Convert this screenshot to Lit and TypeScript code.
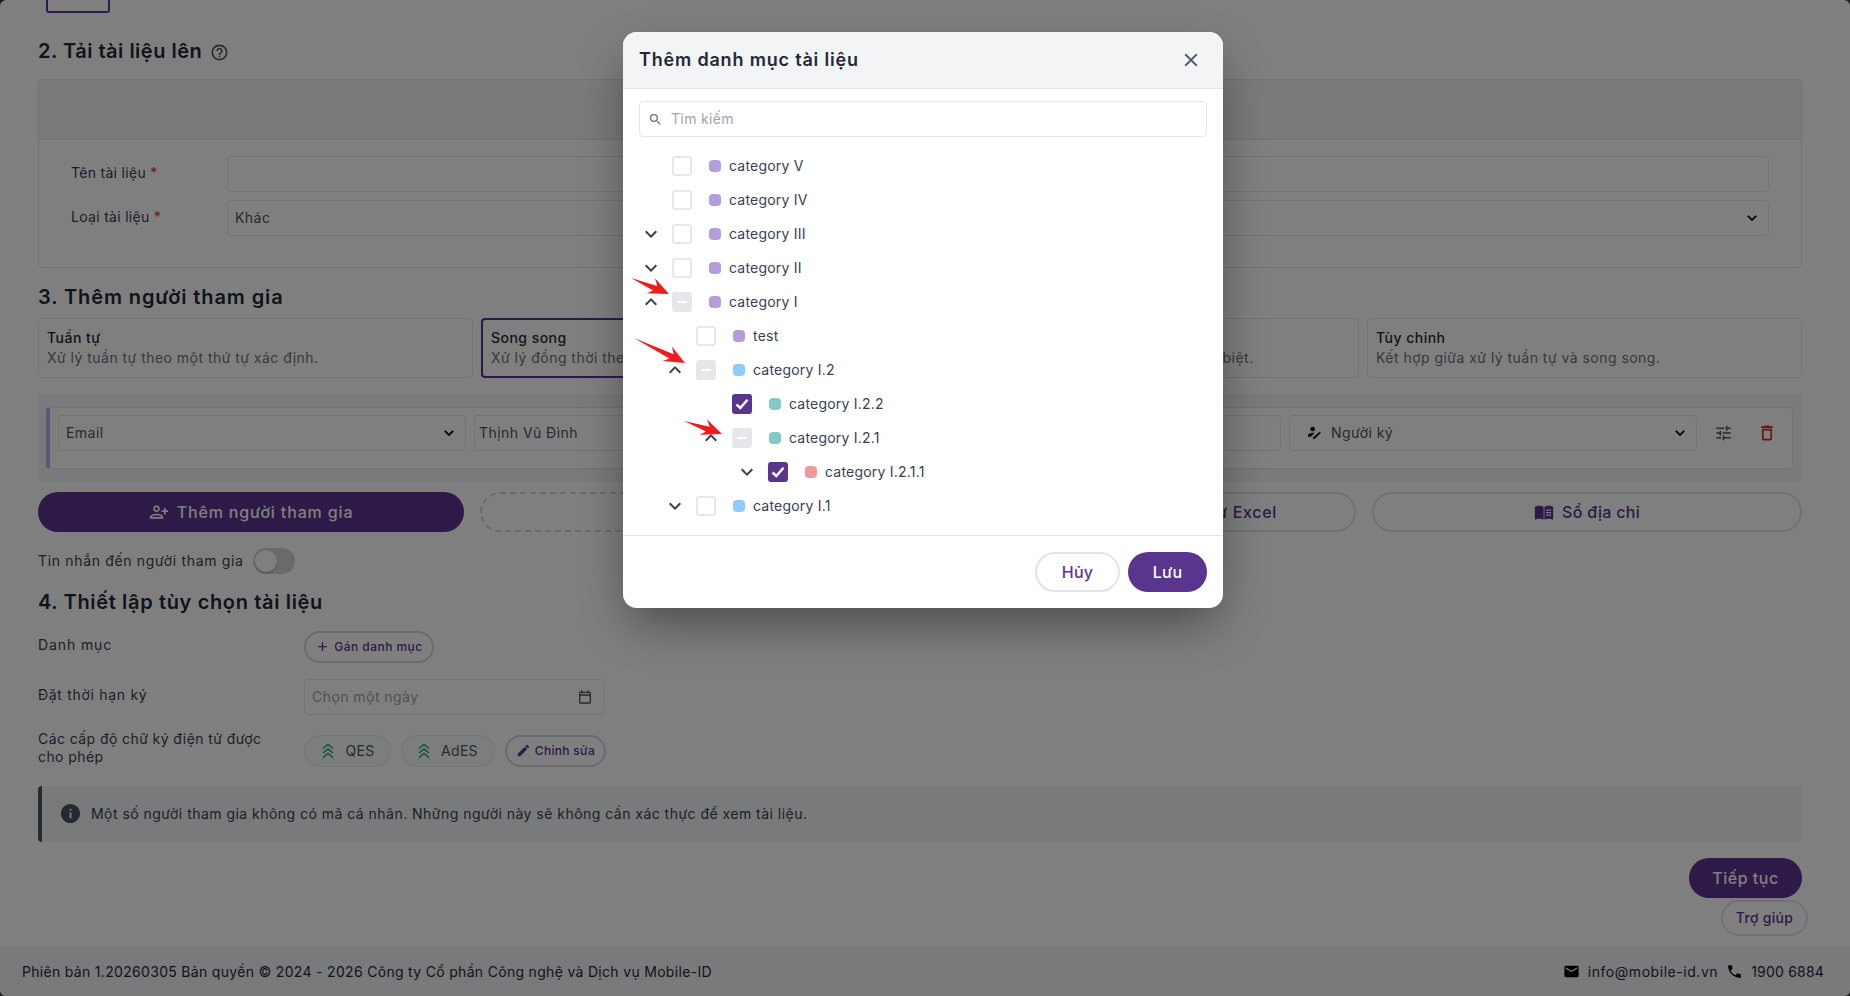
import { LitElement, html, css, svg } from "lit";
import { customElement } from "lit/decorators.js";

const P = {
  help: "M11 18h2v-2h-2v2zm1-16C6.48 2 2 6.48 2 12s4.48 10 10 10 10-4.48 10-10S17.52 2 12 2zm0 18c-4.41 0-8-3.59-8-8s3.59-8 8-8 8 3.59 8 8-3.59 8-8 8zm0-14c-2.21 0-4 1.79-4 4h2c0-1.1.9-2 2-2s2 .9 2 2c0 2-3 1.75-3 5h2c0-2.25 3-2.5 3-5 0-2.21-1.79-4-4-4z",
  close: "M19 6.41 17.59 5 12 10.59 6.41 5 5 6.41 10.59 12 5 17.59 6.41 19 12 13.41 17.59 19 19 17.59 13.41 12z",
  search: "M15.5 14h-.79l-.28-.27A6.471 6.471 0 0 0 16 9.5 6.5 6.5 0 1 0 9.5 16c1.61 0 3.09-.59 4.23-1.57l.27.28v.79l5 4.99L20.49 19l-4.99-5zm-6 0C7.01 14 5 11.99 5 9.5S7.01 5 9.5 5 14 7.01 14 9.5 11.99 14 9.5 14z",
  down: "M16.59 8.59 12 13.17 7.41 8.59 6 10l6 6 6-6z",
  up: "M12 8l-6 6 1.41 1.41L12 10.83l4.59 4.58L18 14z",
  tune: "M3 17v2h6v-2H3zM3 5v2h10V5H3zm10 16v-2h8v-2h-8v-2h-2v6h2zM7 9v2H3v2h4v2h2V9H7zm14 4v-2H11v2h10zm-6-4h2V7h4V5h-4V3h-2v6z",
  trash: "M6 19c0 1.1.9 2 2 2h8c1.1 0 2-.9 2-2V7H6v12zM8 9h8v10H8V9zm7.5-5-1-1h-5l-1 1H5v2h14V4z",
  personAdd: "M9 12c-2.21 0-4-1.79-4-4s1.79-4 4-4 4 1.79 4 4-1.79 4-4 4zm0-6c-1.1 0-2 .9-2 2s.9 2 2 2 2-.9 2-2-.9-2-2-2zm0 8c2.67 0 8 1.34 8 4v2H1v-2c0-2.66 5.33-4 8-4zm6 4c-.22-.72-3.31-2-6-2-2.7 0-5.8 1.29-6 2h12zm3-3v-3h-3v-2h3V7h2v3h3v2h-3v3h-2z",
  info: "M12 2C6.48 2 2 6.48 2 12s4.48 10 10 10 10-4.48 10-10S17.52 2 12 2zm1 15h-2v-6h2v6zm0-8h-2V7h2v2z",
  mail: "M20 4H4c-1.1 0-1.99.9-1.99 2L2 18c0 1.1.9 2 2 2h16c1.1 0 2-.9 2-2V6c0-1.1-.9-2-2-2zm0 4-8 5-8-5V6l8 5 8-5v2z",
  phone: "M6.62 10.79c1.44 2.83 3.76 5.14 6.59 6.59l2.2-2.2c.27-.27.67-.36 1.02-.24 1.12.37 2.33.57 3.57.57.55 0 1 .45 1 1V20c0 .55-.45 1-1 1-9.39 0-17-7.61-17-17 0-.55.45-1 1-1h3.5c.55 0 1 .45 1 1 0 1.25.2 2.45.57 3.57.11.35.03.74-.25 1.02l-2.2 2.2z",
  plus: "M19 13h-6v6h-2v-6H5v-2h6V5h2v6h6v2z",
  edit: "M3 17.25V21h3.75L17.81 9.94l-3.75-3.75L3 17.25zM20.71 7.04a1 1 0 0 0 0-1.41l-2.34-2.34a1 1 0 0 0-1.41 0l-1.83 1.83 3.75 3.75 1.83-1.83z",
  calendar: "M6 2h2v2h8V2h2v2h1c1.1 0 2 .9 2 2v14c0 1.1-.9 2-2 2H5c-1.1 0-2-.9-2-2V6c0-1.1.9-2 2-2h1V2zM5 10v10h14V10H5zm0-2h14V6H5v2z",
  book: "M1 6c1.5-1.1 3.6-1.5 5.5-1.5S10.5 4.9 11.5 6v15.2c-1.4-.9-3.3-1.2-5-1.2-1.5 0-3.4.4-5 1.1-.3.1-.5-.1-.5-.4V6zM12.5 6c1-1.1 3.1-1.5 5-1.5S21.5 4.9 23 6v14.7c0 .3-.2.5-.5.4-1.6-.7-3.5-1.1-5-1.1-1.7 0-3.6.3-5 1.2V6zm2 3v1.5h6V9h-6zm0 3v1.5h6V12h-6zm0 3v1.5h6V15h-6z",
  signer: "M10 4a3.6 3.6 0 1 1 0 7.2A3.6 3.6 0 0 1 10 4zM3 19v-1.8c0-2.6 4.4-4 7-4 .9 0 1.7.1 2.5.3L7.3 19H3zM20.5 11.5l1.8 1.8-8.8 8.8-3.4.9.9-3.4 9.5-8.1z",
  excel: "M14 2H6c-1.1 0-2 .9-2 2v16c0 1.1.9 2 2 2h12c1.1 0 2-.9 2-2V8l-6-6zm-1 7V3.5L18.5 9H13zM8 13h8v2H8v-2zm0 4h8v2H8v-2z",
};

const icon = (d: string, cls = "") =>
  html`<svg class="ic ${cls}" viewBox="0 0 24 24" aria-hidden="true"><path d=${d}></path></svg>`;

const chevrons = () => html`<svg class="lvl" viewBox="0 0 16 18" aria-hidden="true">
  <path d="M3 6.5 8 2.5l5 4M3 11 8 7l5 4M3 15.5 8 11.5l5 4"></path></svg>`;

type Node = { label: string; indent: number; dot: string; state: "off" | "on" | "mixed"; chev?: "up" | "down" };
const PURPLE = "#b39ddb", BLUE = "#90caf9", TEAL = "#80cbc4", PINK = "#ef9a9a";
const TREE: Node[] = [
  { label: "category V", indent: 0, dot: PURPLE, state: "off" },
  { label: "category IV", indent: 0, dot: PURPLE, state: "off" },
  { label: "category III", indent: 0, dot: PURPLE, state: "off", chev: "down" },
  { label: "category II", indent: 0, dot: PURPLE, state: "off", chev: "down" },
  { label: "category I", indent: 0, dot: PURPLE, state: "mixed", chev: "up" },
  { label: "test", indent: 24, dot: PURPLE, state: "off" },
  { label: "category I.2", indent: 24, dot: BLUE, state: "mixed", chev: "up" },
  { label: "category I.2.2", indent: 60, dot: TEAL, state: "on" },
  { label: "category I.2.1", indent: 60, dot: TEAL, state: "mixed", chev: "up" },
  { label: "category I.2.1.1", indent: 96, dot: PINK, state: "on", chev: "down" },
  { label: "category I.1", indent: 24, dot: BLUE, state: "off", chev: "down" },
];

const OPTIONS = [
  { t: "Tuần tự", s: "Xử lý tuần tự theo một thứ tự xác định." },
  { t: "Song song", s: "Xử lý đồng thời theo cùng một lúc.", sel: true },
  { t: "Riêng biệt", s: "Mỗi người tham gia xử lý độc lập và tách biệt." },
  { t: "Tùy chỉnh", s: "Kết hợp giữa xử lý tuần tự và song song." },
];

const ARROWS: [number, number, number, number][] = [
  [631, 278, 669, 294],
  [634, 338, 685, 363],
  [684, 421, 722, 434],
];

function arrow([x0, y0, x1, y1]: [number, number, number, number]) {
  const len = Math.hypot(x1 - x0, y1 - y0);
  const dx = (x1 - x0) / len, dy = (y1 - y0) / len;
  const nx = -dy, ny = dx;
  const at = (back: number, side: number) =>
    `${(x1 - dx * back + nx * side).toFixed(1)},${(y1 - dy * back + ny * side).toFixed(1)}`;
  const pts = [`${x0},${y0}`, at(14, -2.8), at(19, -9), `${x1},${y1}`, at(21, 8), at(16, 2.8)].join(" ");
  return svg`<polygon points=${pts}></polygon>`;
}

@customElement("app-root")
export class AppRoot extends LitElement {
  static styles = css`
    :host { display: block; width: 1850px; height: 996px; background: #3a3a3a; overflow: hidden; position: relative;
      font-family: Inter, "Noto Sans", sans-serif; font-size: 14px; color: #1f2937; letter-spacing: .015em; }
    * { box-sizing: border-box; }
    .ic { width: 20px; height: 20px; fill: currentColor; flex: none; display: block; }
    .page { height: 996px; display: flex; flex-direction: column; background: #fff; border-radius: 6px; overflow: hidden; }
    .main { flex: 1; padding: 0 48px 0 38px; display: flex; flex-direction: column; }
    .stub { width: 64px; height: 13px; margin-left: 8px; border: 2px solid #5a3590; border-top: 0; border-radius: 0 0 3px 3px; flex: none; }
    h2 { margin: 0; font-size: 20px; line-height: 24px; font-weight: 600; color: #1f2937; display: flex; align-items: center; gap: 8px; }
    .h-upload { margin-top: 26px; letter-spacing: .5px; }
    .h-upload .ic { width: 19px; height: 19px; color: #4b5563; margin-top: 3px; }
    .h-people { margin-top: 17px; letter-spacing: .9px; }
    .h-opts { margin-top: 16px; letter-spacing: .65px; }
    .card { margin-top: 16px; height: 189px; border: 1px solid #e5e7eb; border-radius: 4px; flex: none; }
    .card-head { height: 60px; background: #f3f4f6; border-bottom: 1px solid #e5e7eb; border-radius: 3px 3px 0 0; }
    .card-body { padding: 16px 32px; display: grid; grid-template-columns: 156px 1fr; gap: 8px 0; align-items: center; }
    .req { color: #dc2626; }
    .lab { padding-bottom: 3px; color: #374151; letter-spacing: .3px; }
    .field { height: 36px; border: 1px solid #e5e7eb; border-radius: 4px; padding: 0 7px 2px; display: flex; align-items: center; justify-content: space-between; color: #4b5563; background: #fff; min-width: 0; white-space: nowrap; overflow: hidden; letter-spacing: .45px; }
    .field .ic { width: 18px; height: 18px; color: #111827; stroke: currentColor; stroke-width: .9; margin-top: 2px; }
    .name { padding-left: 4px; }
    .options { margin-top: 9px; display: grid; grid-template-columns: repeat(4, 1fr); gap: 8px; flex: none; }
    .opt { height: 60px; border: 1px solid #e5e7eb; border-radius: 4px; padding: 9px 8px; line-height: 20px; white-space: nowrap; overflow: hidden; letter-spacing: .47px; }
    .opt.sel { border: 2px solid #5a3590; padding: 8px 7px 8px 8px; }
    .opt b { display: block; font-weight: 500; color: #1f2937; }
    .opt span { color: #6b7280; }
    .people { margin-top: 16px; height: 88px; background: #f3f4f6; border-radius: 4px; padding: 13px 9px 13px 8px; flex: none; }
    .person { height: 62px; background: #fff; border: 1px solid #e5e7eb; border-left: 4px solid #c4a8f0; border-radius: 4px; padding: 7px 6px 0 8px;
      display: grid; grid-template-columns: 408px 1fr 1fr 408px 81px; gap: 8px; align-items: start; }
    .role { display: flex; align-items: center; gap: 9px; padding-left: 9px; }
    .role .ic { width: 16px; height: 16px; margin: 0; stroke-width: 0; }
    .tools { height: 36px; display: flex; gap: 6px; }
    .tools .ic { width: 37px; height: 36px; padding: 8px 9px; color: #4b5563; }
    .tools .del { width: 38px; color: #dc2626; }
    .actions { margin-top: 10px; display: grid; grid-template-columns: 426px 1fr 1fr 1fr; gap: 16px; flex: none; }
    .btn { height: 40px; padding-bottom: 1px; border-radius: 20px; display: flex; align-items: center; justify-content: center; gap: 8px; font-size: 16px; font-weight: 500; color: #5a3590; border: 2px solid #e5e0ee; background: #fff; white-space: nowrap; letter-spacing: .3px; }
    .btn.fill { background: #5a3590; border: 0; color: #fff; }
    .btn.dash { border: 2px dashed #d1d5db; }
    .btn.xls { letter-spacing: .65px; }
    .actions .fill { letter-spacing: .85px; }
    .tog-row { margin-top: 16px; height: 26px; display: grid; grid-template-columns: 215px 42px; align-items: center; flex: none; color: #374151; letter-spacing: .66px; }
    .tog-row span { padding-bottom: 1px; }
    .toggle { height: 26px; border-radius: 13px; background: #d1d5db; padding: 2px; }
    .toggle i { display: block; width: 22px; height: 22px; border-radius: 50%; background: #fff; box-shadow: 0 1px 2px rgba(0,0,0,.3); }
    .row { display: grid; grid-template-columns: 266px 1fr; flex: none; color: #374151; }
    .row .t { line-height: 18px; }
    .r1 { margin-top: 17px; } .r1 .t { padding-top: 5px; letter-spacing: .9px; }
    .r2 { margin-top: 16px; } .r2 .t { padding-top: 7px; letter-spacing: .7px; }
    .r3 { margin-top: 15px; } .r3 .t { letter-spacing: .42px; } .chips { margin-top: 5px; display: flex; gap: 10px; }
    .pill { height: 32px; border-radius: 16px; display: inline-flex; align-items: center; justify-content: center; white-space: nowrap; padding-bottom: 1px; }
    .pill.act { border: 2px solid #d8d2e4; color: #5a3590; font-size: 12px; font-weight: 500; background: #fff; letter-spacing: .3px; }
    .pill.act .ic { width: 15px; height: 15px; }
    .assign { width: 130px; gap: 4px; }
    .pill.act.assign { letter-spacing: .45px; }
    .editb { width: 101px; gap: 4px; }
    .lv { border: 1px solid #e5e7eb; color: #4b5563; gap: 9px; background: #f9fafb; letter-spacing: .3px; }
    .lv1 { width: 87px; } .lv2 { width: 94px; padding-right: 2px; }
    .lvl { width: 16px; height: 18px; fill: none; stroke: #2f9e77; stroke-width: 1.6; }
    .date { width: 300px; color: #9ca3af; padding-right: 10px; }
    .date .ic { width: 16px; height: 16px; color: #4b5563; stroke-width: 0; }
    .alert { margin-top: 19px; height: 56px; padding-bottom: 1px; background: #f3f4f6; border-left: 4px solid #4b5563; border-radius: 4px; display: flex; align-items: center; gap: 9px; padding-left: 17px; color: #374151; flex: none; letter-spacing: .47px; }
    .alert .ic { width: 23px; height: 23px; color: #4b5563; }
    .next { margin: 16px 0 0 auto; width: 113px; flex: none; letter-spacing: .5px; }
    .helpb { margin: 2px -6px 0 auto; width: 87px; height: 36px; font-size: 14px; flex: none; }
    .foot { height: 50px; flex: none; background: #f3f4f6; display: flex; align-items: center; justify-content: space-between; padding: 0 26px 0 22px; color: #1f2937; margin-top: 10px; letter-spacing: .31px; }
    .contact { display: flex; align-items: center; gap: 8px; }
    .contact .ic { width: 17px; height: 17px; color: #000; }
    .contact .em { letter-spacing: .55px; }
    .contact .tel { letter-spacing: .2px; }
    .overlay { position: absolute; inset: 0; background: rgba(0,0,0,.5); }
    .modal { position: absolute; left: 623px; top: 32px; width: 600px; height: 576px; background: #fff; border-radius: 14px; overflow: hidden; display: flex; flex-direction: column; }
    .modal-wrap { position: absolute; left: 623px; top: 32px; width: 600px; height: 576px; border-radius: 14px; box-shadow: 0 20px 50px -8px rgba(0,0,0,.45); }
    .m-head { height: 57px; background: #f3f4f6; border-bottom: 1px solid #e5e7eb; display: flex; align-items: center; justify-content: space-between; padding: 0 21px 0 16px; flex: none; }
    .m-head h3 { margin: 0; font-size: 18px; font-weight: 600; color: #1f2937; letter-spacing: .82px; padding-bottom: 1px; }
    .m-head .ic { width: 22px; height: 22px; color: #4b5563; }
    .search { margin: 12px 16px 0; height: 36px; border: 1px solid #e5e7eb; border-radius: 4px; display: flex; align-items: center; gap: 7px; padding: 0 8px; flex: none; }
    .search .ic { width: 15px; height: 15px; color: #6b7280; }
    .search input { flex: 1; border: 0; outline: 0; font: inherit; letter-spacing: .35px; color: #111827; padding: 0 0 1px 1px; background: none; }
    .search input::placeholder { color: #9ca3af; }
    .tree { margin-top: 12px; flex: 1; display: flex; flex-direction: column; }
    .node { height: 34px; display: flex; align-items: center; padding-left: 49px; color: #374151; flex: none; }
    .node .txt { padding-bottom: 1px; }
    .chev { width: 24px; height: 24px; margin-left: -33px; margin-right: 9px; color: #374151; flex: none; }
    .none { width: 20px; height: 20px; margin-left: -31px; margin-right: 11px; flex: none; }
    .cb { width: 20px; height: 20px; border: 2px solid #e5e7eb; border-radius: 3px; background: #fff; flex: none; display: flex; align-items: center; justify-content: center; }
    .cb.mixed { background: #e5e7eb; }
    .cb.mixed::after { content: ""; width: 10px; height: 2px; background: #fff; border-radius: 1px; }
    .cb.on { background: #5a3590; border-color: #5a3590; }
    .cb svg { width: 16px; height: 16px; fill: none; stroke: #fff; stroke-width: 2.4; }
    .dot { width: 12px; height: 12px; border-radius: 4px; margin: 0 8px 0 17px; flex: none; }
    .m-foot { height: 73px; border-top: 1px solid #e5e7eb; display: flex; justify-content: flex-end; align-items: flex-start; gap: 8px; padding: 16px 16px 0; flex: none; }
    .cancel { width: 85px; } .save { width: 79px; }
    .anno { position: absolute; left: 0; top: 0; width: 1850px; height: 996px; pointer-events: none; }
    .anno polygon { fill: #ee1c1c; }
  `;

  render() {
    return html`
      <div class="page">
        <div class="main">
          <div class="stub"></div>
          <h2 class="h-upload">2. Tải tài liệu lên ${icon(P.help)}</h2>
          <section class="card">
            <div class="card-head"></div>
            <div class="card-body">
              <div class="lab">Tên tài liệu <span class="req">*</span></div>
              <div class="field"></div>
              <div class="lab">Loại tài liệu <span class="req">*</span></div>
              <div class="field">Khác ${icon(P.down)}</div>
            </div>
          </section>
          <h2 class="h-people">3. Thêm người tham gia</h2>
          <div class="options">
            ${OPTIONS.map(o => html`<div class="opt ${o.sel ? "sel" : ""}"><b>${o.t}</b><span>${o.s}</span></div>`)}
          </div>
          <div class="people">
            <div class="person">
              <div class="field">Email ${icon(P.down)}</div>
              <div class="field name">Thịnh Vũ Đình</div>
              <div class="field"></div>
              <div class="field"><span class="role">${icon(P.signer)} Người ký</span> ${icon(P.down)}</div>
              <div class="tools">${icon(P.tune)}${icon(P.trash, "del")}</div>
            </div>
          </div>
          <div class="actions">
            <div class="btn fill">${icon(P.personAdd)} Thêm người tham gia</div>
            <div class="btn dash">${icon(P.personAdd)} Thêm từ nhóm</div>
            <div class="btn xls">${icon(P.excel)} Thêm người tham gia từ Excel</div>
            <div class="btn">${icon(P.book)} Sổ địa chỉ</div>
          </div>
          <div class="tog-row"><span>Tin nhắn đến người tham gia</span><div class="toggle"><i></i></div></div>
          <h2 class="h-opts">4. Thiết lập tùy chọn tài liệu</h2>
          <div class="row r1"><div class="t">Danh mục</div><div><span class="pill act assign">${icon(P.plus)} Gán danh mục</span></div></div>
          <div class="row r2"><div class="t">Đặt thời hạn ký</div><div class="field date">Chọn một ngày ${icon(P.calendar)}</div></div>
          <div class="row r3"><div class="t">Các cấp độ chữ ký điện tử được<br />cho phép</div>
            <div class="chips">
              <span class="pill lv lv1">${chevrons()} QES</span>
              <span class="pill lv lv2">${chevrons()} AdES</span>
              <span class="pill act editb">${icon(P.edit)} Chỉnh sửa</span>
            </div>
          </div>
          <div class="alert">${icon(P.info)} Một số người tham gia không có mã cá nhân. Những người này sẽ không cần xác thực để xem tài liệu.</div>
          <div class="btn fill next">Tiếp tục</div>
          <div class="btn helpb">Trợ giúp</div>
        </div>
        <footer class="foot">
          <span>Phiên bản 1.20260305 Bản quyền © 2024 - 2026 Công ty Cổ phần Công nghệ và Dịch vụ Mobile-ID</span>
          <span class="contact">${icon(P.mail)} <span class="em">info@mobile-id.vn</span> ${icon(P.phone)} <span class="tel">1900 6884</span></span>
        </footer>
      </div>
      <div class="overlay"></div>
      <div class="modal-wrap"></div>
      <div class="modal">
        <div class="m-head"><h3>Thêm danh mục tài liệu</h3>${icon(P.close)}</div>
        <div class="search">${icon(P.search)}<input placeholder="Tìm kiếm" /></div>
        <div class="tree">
          ${TREE.map(n => html`
            <div class="node" style="margin-left:${n.indent}px">
              ${n.chev ? icon(n.chev === "up" ? P.up : P.down, "chev") : html`<span class="none"></span>`}
              <span class="cb ${n.state}">${n.state === "on"
                ? html`<svg viewBox="0 0 16 16"><path d="M2.5 8.5 6.3 12 13.5 3.8"></path></svg>` : ""}</span>
              <span class="dot" style="background:${n.dot}"></span>
              <span class="txt">${n.label}</span>
            </div>`)}
        </div>
        <div class="m-foot">
          <div class="btn cancel">Hủy</div>
          <div class="btn fill save">Lưu</div>
        </div>
      </div>
      <svg class="anno" viewBox="0 0 1850 996" aria-hidden="true">${ARROWS.map(arrow)}</svg>
    `;
  }
}
